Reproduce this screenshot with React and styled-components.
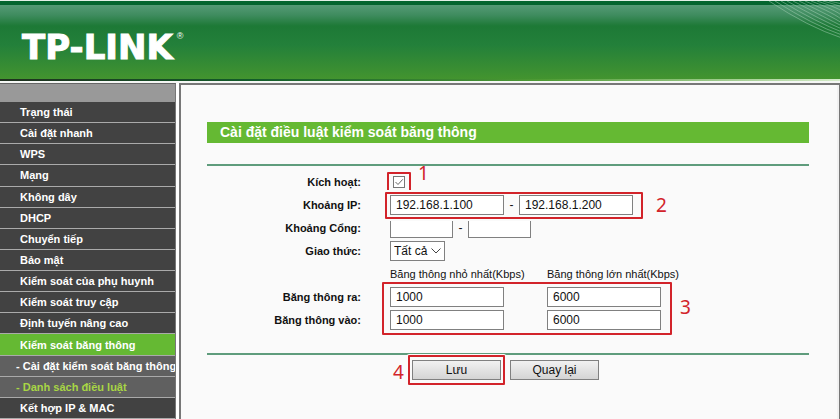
import React from "react";
import styled, { createGlobalStyle, css } from "styled-components";

const paper = "#fafafa";
const leaf = "#65b933";
const rule = "#5f9c7c";
const mark = "#d2232a";

const GlobalStyle = createGlobalStyle`
  *, *::before, *::after { box-sizing: border-box; }
  body {
    margin: 0;
    background: #fff;
    color: #111;
    font: 12px/16px "Liberation Sans", Arial, sans-serif;
  }
`;

const Page = styled.div`
  min-height: 100vh;
  display: flex;
  flex-direction: column;
`;

const Header = styled.header`
  position: relative;
  height: 83px;
  flex: none;
  display: flex;
  align-items: center;
  padding: 12px 22px 0;
  border-top: 1px solid #e4f0e8;
  border-bottom: 2px solid #f4f6f4;
  background:
    linear-gradient(90deg, #20301f, #125c2a 30%, #4f9c34 65%, #d4ebc8) bottom / 100% 2px no-repeat,
    linear-gradient(#04652f 0 4px, #559a76 4px, #3f8c5f 14px, #1d7936 25px, #23803a 44px, #43942f 78px);
`;

const Logo = styled.h1`
  margin: 0;
  display: flex;
  align-items: flex-start;
  color: #fff;
  font: 700 34px/34px "DejaVu Sans", Verdana, sans-serif;
  -webkit-text-stroke: 1px #fff;
`;

const Registered = styled.sup`
  margin: 0 0 0 4px;
  font: 400 9px/12px "Liberation Sans", Arial, sans-serif;
  -webkit-text-stroke: 0;
`;

const Waves = styled.svg`
  position: absolute;
  top: 0;
  right: 0;
  width: 72px;
  height: 38px;
`;

const Body = styled.div`
  flex: 1;
  display: flex;
  gap: 3px;
`;

const Sidebar = styled.nav`
  width: 176px;
  flex: none;
  display: flex;
  flex-direction: column;
  padding-top: 18px;
  border-top: 1px solid #666;
  border-right: 1px solid #777;
  background: #999;
`;

const Menu = styled.ul`
  flex: 1;
  margin: 0;
  padding: 0;
  list-style: none;
  display: grid;
  grid-template-columns: minmax(0, 1fr);
  grid-auto-rows: minmax(21px, 1fr);
`;

const tones = {
  main: css`background: #424242; color: #fff;`,
  active: css`background: ${leaf}; color: #fff;`,
  sub: css`background: #606060; color: #fff; padding-left: 16px;`,
  current: css`background: #606060; color: #a8d545; padding-left: 16px;`,
};

const MenuLink = styled.a`
  height: 100%;
  display: flex;
  align-items: center;
  padding-left: 20px;
  border-bottom: 1px solid #aaa;
  font-size: 11px;
  font-weight: 700;
  white-space: nowrap;
  overflow: hidden;
  text-decoration: none;
  ${(p) => tones[p.$tone]}
`;

const Panel = styled.main`
  flex: 1;
  min-width: 0;
  margin-right: 1px;
  padding: 37px 30px 32px 26px;
  border: solid #777;
  border-width: 2px 0 0 2px;
  background: ${paper};
  box-shadow: inset -2px 0 #f1f1f1, 1px 0 #777;
`;

const Title = styled.h2`
  margin: 0 0 21px;
  padding: 0 13px;
  background: ${leaf};
  color: #fff;
  font-size: 14px;
  line-height: 21px;
`;

const Section = styled.div`
  display: grid;
  gap: 3px;
  padding: 6px 0 23px;
  border: solid ${rule};
  border-width: 2px 0;
`;

const Row = styled.div`
  display: flex;
  align-items: center;
  min-height: 20px;
`;

const Label = styled.label`
  width: 154px;
  flex: none;
  margin-right: 29px;
  text-align: right;
  font-weight: 700;
  font-size: 11px;
`;

const Fields = styled.div`
  position: relative;
  display: flex;
  align-items: center;
  gap: ${(p) => p.$gap || 0}px;
`;

const Dash = styled.span`
  width: 15px;
  text-align: center;
`;

const TextBox = styled.input`
  width: ${(p) => (p.$short ? 63 : 114)}px;
  height: 20px;
  padding: 0 5px;
  border: 1px solid #808080;
  border-radius: 0;
  background: #fff;
  color: #111;
  font: 12px "Liberation Sans", Arial, sans-serif;
`;

const TickBox = styled.input`
  appearance: none;
  width: 12px;
  height: 12px;
  margin: 0 0 0 3px;
  border: 1px solid #777;
  background: #fff;
  &:checked {
    background: #fff
      url("data:image/svg+xml,%3Csvg xmlns='http://www.w3.org/2000/svg' viewBox='0 0 10 10'%3E%3Cpath d='M1.5 5 4 7.5 8.8 2.3' fill='none' stroke='%23666'/%3E%3C/svg%3E")
      center / 10px 10px;
  }
`;

const Drop = styled.select`
  appearance: none;
  width: 55px;
  height: 20px;
  padding: 0 3px;
  border: 1px solid #808080;
  border-radius: 0;
  color: #111;
  font: 12px "Liberation Sans", Arial, sans-serif;
  background: #fff
    url("data:image/svg+xml,%3Csvg xmlns='http://www.w3.org/2000/svg' viewBox='0 0 10 6'%3E%3Cpath d='M.5 .5 5 5 9.5 .5' fill='none' stroke='%23444'/%3E%3C/svg%3E")
    right 3px center / 10px 6px no-repeat;
`;

const Heading = styled.span`
  width: 157px;
  font-size: 11px;
  white-space: nowrap;
`;

const Outline = styled.div`
  position: absolute;
  z-index: 1;
  inset: ${(p) => p.$inset};
  border: 2px solid ${mark};
  border-radius: 1px;
  box-shadow: 0 0 0 ${(p) => p.$halo || 0}px ${paper};
  pointer-events: none;
`;

const Step = styled.span`
  position: absolute;
  top: ${(p) => p.$top}px;
  left: ${(p) => p.$left};
  color: ${mark};
  font: 19px/20px "Noto Sans", "Open Sans", sans-serif;
`;

const Actions = styled.div`
  display: flex;
  gap: 9px;
  padding: 5px 0 0 205px;
`;

const Action = styled.div`
  position: relative;
`;

const Button = styled.button`
  display: block;
  width: 89px;
  height: 20px;
  padding: 0;
  border: 1px solid #808080;
  background: linear-gradient(#f1f1f1, #d4d4d4);
  color: #111;
  font: 12px "Liberation Sans", Arial, sans-serif;
`;

const menu = [
  ["Trạng thái", "main"],
  ["Cài đặt nhanh", "main"],
  ["WPS", "main"],
  ["Mạng", "main"],
  ["Không dây", "main"],
  ["DHCP", "main"],
  ["Chuyển tiếp", "main"],
  ["Bảo mật", "main"],
  ["Kiểm soát của phụ huynh", "main"],
  ["Kiểm soát truy cập", "main"],
  ["Định tuyến nâng cao", "main"],
  ["Kiểm soát băng thông", "active"],
  ["- Cài đặt kiểm soát băng thông", "sub"],
  ["- Danh sách điều luật", "current"],
  ["Kết hợp IP & MAC", "main"],
];

const waveOffsets = [0, 1, 2, 3, 4, 5, 6, 7, 8, 9, 10];

export default function App() {
  return (
    <>
      <GlobalStyle />
      <Page>
        <Header>
          <Logo>
            TP-LINK<Registered>®</Registered>
          </Logo>
          <Waves viewBox="0 0 72 38" aria-hidden="true">
            {waveOffsets.map((n) => (
              <path
                key={n}
                d={`M${1 + n * 6} 0 Q${40 + n * 5} ${26 - n * 2} 74 ${37 - n * 3}`}
                fill="none"
                stroke="#a5d2b6"
                strokeOpacity="0.5"
              />
            ))}
          </Waves>
        </Header>
        <Body>
          <Sidebar>
            <Menu>
              {menu.map(([text, tone]) => (
                <li key={text}>
                  <MenuLink href="#" $tone={tone}>{text}</MenuLink>
                </li>
              ))}
            </Menu>
          </Sidebar>
          <Panel>
            <Title>Cài đặt điều luật kiểm soát băng thông</Title>
            <Section>
              <Row>
                <Label htmlFor="enable">Kích hoạt:</Label>
                <Fields>
                  <TickBox id="enable" type="checkbox" defaultChecked />
                  <Outline $inset="-4px -6px -6px -3px" />
                  <Step $top={-13} $left="28px">1</Step>
                </Fields>
              </Row>
              <Row>
                <Label htmlFor="ip-from">Khoảng IP:</Label>
                <Fields>
                  <TextBox id="ip-from" defaultValue="192.168.1.100" />
                  <Dash>-</Dash>
                  <TextBox aria-label="Khoảng IP đến" defaultValue="192.168.1.200" />
                  <Outline $inset="-3px -10px -4px -5px" $halo={2} />
                  <Step $top={0} $left="266px">2</Step>
                </Fields>
              </Row>
              <Row>
                <Label htmlFor="port-from">Khoảng Cổng:</Label>
                <Fields>
                  <TextBox id="port-from" $short />
                  <Dash>-</Dash>
                  <TextBox aria-label="Khoảng Cổng đến" $short />
                </Fields>
              </Row>
              <Row>
                <Label htmlFor="protocol">Giao thức:</Label>
                <Drop id="protocol" defaultValue="all">
                  <option value="all">Tất cả</option>
                </Drop>
              </Row>
              <Row>
                <Label as="span" />
                <Heading id="min">Băng thông nhỏ nhất(Kbps)</Heading>
                <Heading id="max">Băng thông lớn nhất(Kbps)</Heading>
              </Row>
              <Row>
                <Label id="out" htmlFor="out-min">Băng thông ra:</Label>
                <Fields $gap={43}>
                  <TextBox id="out-min" aria-labelledby="out min" defaultValue="1000" />
                  <TextBox aria-labelledby="out max" defaultValue="6000" />
                  <Outline $inset="-5px -11px -28px -8px" />
                  <Step $top={10} $left="290px">3</Step>
                </Fields>
              </Row>
              <Row>
                <Label id="in" htmlFor="in-min">Băng thông vào:</Label>
                <Fields $gap={43}>
                  <TextBox id="in-min" aria-labelledby="in min" defaultValue="1000" />
                  <TextBox aria-labelledby="in max" defaultValue="6000" />
                </Fields>
              </Row>
            </Section>
            <Actions>
              <Action>
                <Button type="button">Lưu</Button>
                <Outline $inset="-5px -4px" $halo={1} />
                <Step $top={2} $left="-19px">4</Step>
              </Action>
              <Action>
                <Button type="button">Quay lại</Button>
              </Action>
            </Actions>
          </Panel>
        </Body>
      </Page>
    </>
  );
}
